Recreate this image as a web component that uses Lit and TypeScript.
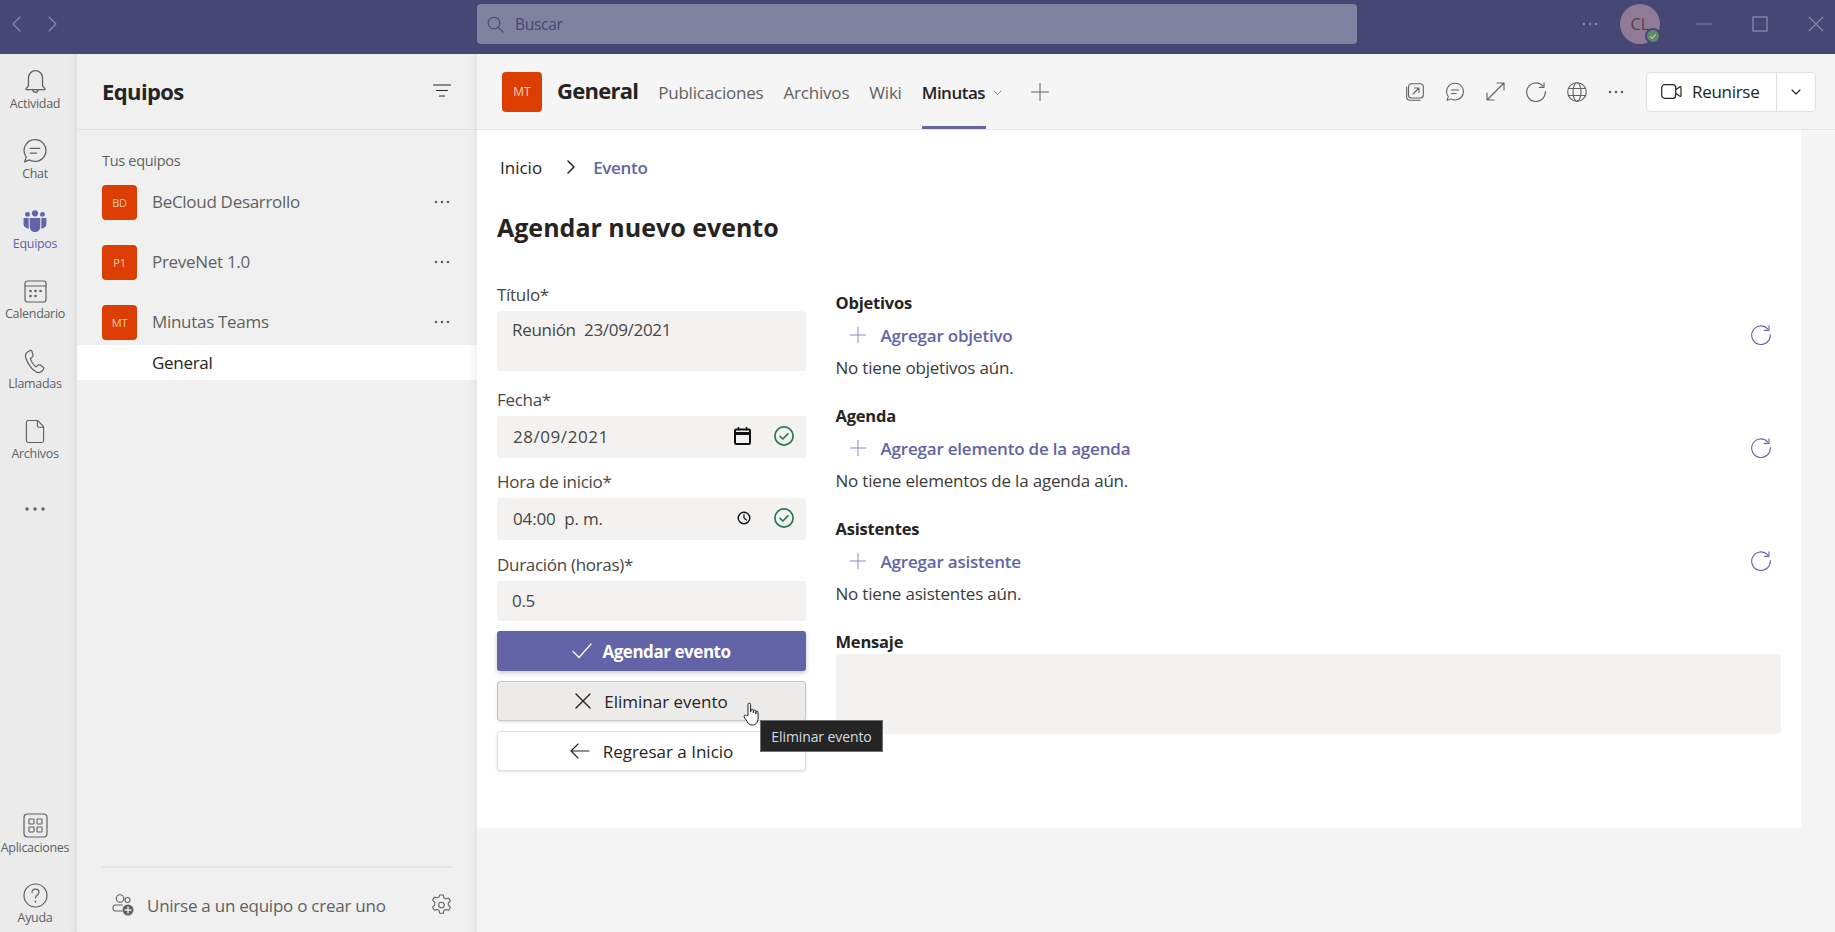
import { LitElement, html, css, svg } from "lit";
import { customElement } from "lit/decorators.js";

const I = (w: number, h: number, vb: string, body: unknown, cls = "") =>
  html`<svg class=${cls} width=${w} height=${h} viewBox=${vb} fill="none" stroke="currentColor" stroke-width="1" stroke-linecap="round" stroke-linejoin="round">${body}</svg>`;

const bell = svg`<path d="M5 16.500V9a6.500 6.500 0 0 1 13 0v7.500l2.200 2.500a.6.6 0 0 1-.4 1H3.200a.6.6 0 0 1-.4-1z" stroke-width="1.200"/><path d="M9 20.500a2.600 2.600 0 0 0 5 0" stroke-width="1.200"/>`;
const chat = svg`<path d="M12.500 1.500a10.500 10.500 0 1 1-5.200 19.600L2.500 23l1.600-4.800A10.500 10.500 0 0 1 12.500 1.500z" stroke-width="1.200"/><path d="M8 10h9M8 14.500h6" stroke-width="1.300"/>`;
const teams = svg`<g fill="currentColor" stroke="none"><circle cx="13" cy="3.800" r="3.500"/><circle cx="4.500" cy="5" r="2.800"/><circle cx="21.500" cy="5" r="2.800"/><path d="M7 9h12v10a6 6 0 0 1-12 0z"/><path d="M0 9h5.800v9.500c0 1 .2 1.800.4 2.500C3 21 0 19 0 15.500z"/><path d="M26 9h-5.800v9.500c0 1-.2 1.800-.4 2.500 3.200 0 6.200-2 6.200-5.500z"/></g>`;
const cal = svg`<rect x="1" y="1" width="21" height="21" rx="2.500" stroke-width="1.200"/><path d="M1 6h21" stroke-width="1.200"/><g fill="currentColor" stroke="none"><circle cx="6.500" cy="11" r="1.300"/><circle cx="11.500" cy="11" r="1.300"/><circle cx="16.500" cy="11" r="1.300"/><circle cx="6.500" cy="16" r="1.300"/><circle cx="11.500" cy="16" r="1.300"/></g>`;
const phone = svg`<path d="M6 1.500 3.500 3C1.500 4.500 1 7 2 9.500c2 5.500 5 10 9.500 13 2.500 1.500 5 1.200 6.500-.5l1.500-1.800c.5-.8.300-1.500-.3-2l-3-2.200c-.7-.5-1.400-.4-2 .1l-1.500 1.300c-.5.300-1 .3-1.500 0-2.200-2-3.700-4.300-4.600-7-.2-.6 0-1 .4-1.300l1.500-1.200c.6-.6.800-1.300.4-2L7.800 2C7.400 1.300 6.700 1.100 6 1.500z" stroke-width="1.200"/>`;
const file = svg`<path d="M3.500 1h10l6 6.500V22a2 2 0 0 1-2 2h-14a2 2 0 0 1-2-2V3a2 2 0 0 1 2-2z" stroke-width="1.200"/><path d="M13 1v5.500a1.500 1.500 0 0 0 1.500 1.500h5" stroke-width="1.200"/>`;
const apps = svg`<rect x="1" y="1" width="23" height="23" rx="3.500" stroke-width="1.200"/><rect x="6" y="6" width="5" height="5" rx=".8" stroke-width="1.100"/><rect x="14" y="6" width="5" height="5" rx=".8" stroke-width="1.100"/><rect x="6" y="14" width="5" height="5" rx=".8" stroke-width="1.100"/><rect x="14" y="14" width="5" height="5" rx=".8" stroke-width="1.100"/>`;
const help = svg`<circle cx="12.500" cy="12.500" r="11.500" stroke-width="1.200"/><path d="M9 9.500c0-2 1.500-3.300 3.500-3.300s3.500 1.300 3.500 3.100c0 2.700-3.500 2.700-3.500 5.700" stroke-width="1.200"/><circle cx="12.500" cy="18.500" r=".9" fill="currentColor" stroke="none"/>`;
const refreshP = svg`<path d="M16.800 3.800A9.300 9.300 0 1 0 19.300 9.500" stroke-width="1.100"/><path d="M18 .8v4.600h-4.600" stroke-width="1.100"/>`;
const plus = svg`<path d="M8 0v16M0 8h16" stroke-width="1"/>`;
const check = svg`<circle cx="9" cy="9" r="8.200" stroke-width="1.500"/><path d="M5.500 9.300 8 11.700l4.500-4.600" stroke-width="1.500"/>`;

const rail = [
  { l: "Actividad", ic: I(25, 26, "0 0 23 24", bell) },
  { l: "Chat", ic: I(26, 26, "0 0 25 25", chat) },
  { l: "Equipos", ic: I(26, 22, "0 0 26 25", teams), a: true },
  { l: "Calendario", ic: I(23, 23, "0 0 23 23", cal) },
  { l: "Llamadas", ic: I(22, 25, "0 0 22 25", phone) },
  { l: "Archivos", ic: I(20, 25, "0 0 21 25", file) },
];
const rail2 = [
  { l: "Aplicaciones", ic: I(25, 25, "0 0 25 25", apps) },
  { l: "Ayuda", ic: I(25, 25, "0 0 25 25", help) },
];
const teamsList = [
  { a: "BD", n: "BeCloud Desarrollo" },
  { a: "P1", n: "PreveNet 1.0" },
  { a: "MT", n: "Minutas Teams" },
];
const sections = [
  { h: "Objetivos", add: "Agregar objetivo", e: "No tiene objetivos aún." },
  { h: "Agenda", add: "Agregar elemento de la agenda", e: "No tiene elementos de la agenda aún." },
  { h: "Asistentes", add: "Agregar asistente", e: "No tiene asistentes aún." },
];

@customElement("app-root")
export class AppRoot extends LitElement {
  static styles = css`
    :host { display: block; width: 1835px; height: 932px; overflow: hidden; font-family: "Open Sans", "Noto Sans", sans-serif; color: #252423; background: #f5f5f5; }
    * { box-sizing: border-box; }
    svg { display: block; flex: none; }
    .top { height: 54px; background: #464775; display: flex; align-items: center; color: #8a8aa8; padding-bottom: 6px; }
    .nav { width: 477px; display: flex; gap: 23px; padding-left: 11px; flex: none; }
    .search { width: 880px; height: 40px; background: #8181a0; border-radius: 4px; display: flex; align-items: center; padding-left: 10px; gap: 11px; color: #464775; font-size: 15.500px; letter-spacing: -.3px; flex: none; }
    .top-r { flex: 1; display: flex; align-items: center; padding-left: 225px; }
    .ava { width: 40px; height: 40px; border-radius: 50%; background: #8f7b95; color: #5d3c55; font-size: 16px; font-weight: 500; display: flex; align-items: center; justify-content: center; position: relative; margin-left: 22px; letter-spacing: .3px; }
    .badge { position: absolute; right: -1px; bottom: 0; width: 16px; height: 16px; border-radius: 50%; background: #618a6b; border: 2px solid #464775; color: #c9d8cc; display: flex; align-items: center; justify-content: center; }
    .win { display: flex; align-items: center; margin-left: 36px; }
    .gapw { width: 40px; }
    .body { display: flex; height: 878px; }
    .rail { width: 77px; flex: none; background: #ebebeb; display: flex; flex-direction: column; padding: 1px 7px 0 0; box-shadow: inset -8px 0 8px -8px rgba(0,0,0,.1); overflow: hidden; }
    .ri { height: 70px; flex: none; display: flex; flex-direction: column; align-items: center; justify-content: flex-end; padding-bottom: 13px; font-size: 12.500px; line-height: 16px; letter-spacing: -.3px; color: #616161; gap: 2px; white-space: nowrap; }
    .ri .box { height: 26px; display: flex; align-items: center; justify-content: center; }
    .ri.a { color: #6264a7; }
    .rdots { height: 68px; flex: none; display: flex; justify-content: center; align-items: center; color: #616161; }
    .sp { flex: 1; }
    .ri.last { margin-bottom: -7px; }
    .side { width: 400px; flex: none; background: #f0f0f0; display: flex; flex-direction: column; box-shadow: inset -8px 0 8px -8px rgba(0,0,0,.09); }
    .side-h { height: 76px; flex: none; border-bottom: 1px solid #e1e1e1; display: flex; align-items: center; justify-content: space-between; padding: 0 26px 2px 25px; }
    .side-h h2 { margin: 0; font-size: 22px; font-weight: 700; letter-spacing: -.6px; color: #252423; }
    .tus { font-size: 14.500px; letter-spacing: -.3px; color: #616161; margin: 21px 0 0 25px; height: 20px; line-height: 20px; }
    .team { height: 60px; display: flex; align-items: center; padding: 0 27px 0 25px; flex: none; }
    .teams { margin-top: 1px; }
    .tav { width: 35px; height: 35px; background: #dc3e00; border-radius: 4px; color: #f4c8b0; font-size: 11px; display: flex; align-items: center; justify-content: center; flex: none; letter-spacing: -.2px; }
    .tn { margin-left: 15px; flex: 1; font-size: 17px; letter-spacing: -.3px; color: #616161; position: relative; top: -1px; }
    .gen { height: 35px; background: linear-gradient(90deg, #fff 98%, #f3f3f3); margin-top: -7px; padding-left: 75px; display: flex; align-items: center; font-size: 17px; letter-spacing: -.3px; color: #252423; width: 400px; }
    .side-f { margin: auto 25px 0; height: 66px; border-top: 2px solid #e3e3e3; display: flex; align-items: center; padding: 10px 0 0 10px; font-size: 17px; letter-spacing: -.25px; color: #616161; flex: none; }
    .side-f span { margin-left: 13px; flex: 1; }
    .main { flex: 1; display: flex; flex-direction: column; min-width: 0; }
    .mh { height: 76px; flex: none; background: #f5f5f5; border-bottom: 1px solid #e4e4e4; display: flex; align-items: center; padding: 0 19px 0 25px; }
    .mav { width: 40px; height: 40px; background: #dc3e00; border-radius: 4px; color: #f7d3c0; font-size: 12px; display: flex; align-items: center; justify-content: center; flex: none; }
    .mh h3 { margin: 0 0 0 15px; font-size: 22px; font-weight: 700; letter-spacing: -.75px; color: #252423; position: relative; top: -2px; }
    .tabs { display: flex; align-self: stretch; margin-left: 20px; gap: 20px; }
    .tab { font-size: 17px; letter-spacing: -.2px; color: #616161; display: flex; align-items: center; position: relative; padding-top: 1px; }
    .tab.on { color: #252423; font-weight: 600; letter-spacing: -.5px; }
    .tab.on::after { content: ""; position: absolute; left: 0; width: 64px; bottom: 0; height: 3px; background: #6264a7; }
    .tchev { margin: 2px 0 0 8px; color: #8a8a8a; }
    .tplus { margin-left: 29px; color: #616161; }
    .hicons { margin-left: auto; display: flex; align-items: center; color: #616161; gap: 21px; }
    .join { margin-left: 22px; width: 170px; height: 40px; border: 1px solid #e1dfdd; border-radius: 5px; background: #fff; display: flex; align-items: center; color: #252423; }
    .join .l { width: 130px; height: 100%; border-right: 1px solid #e1dfdd; display: flex; align-items: center; padding-left: 14px; gap: 10px; font-size: 17px; font-weight: 500; letter-spacing: -.3px; }
    .join .r { flex: 1; display: flex; justify-content: center; }
    .content { width: 1324px; height: 698px; background: #fff; padding: 0 20px; flex: none; }
    .crumb { height: 36px; margin-top: 19px; padding-left: 3px; display: flex; align-items: center; font-size: 17px; }
    .crumb a { color: #6264a7; font-weight: 600; letter-spacing: -.3px; }
    .crumb svg { margin: 0 18px 0 25px; }
    h1 { margin: 0; font-size: 25px; font-weight: 700; height: 40px; line-height: 40px; margin-top: 22px; color: #252423; }
    .cols { display: grid; grid-template-columns: 309px 945px; column-gap: 30px; margin-top: 1px; }
    .form { display: flex; flex-direction: column; padding-top: 34px; }
    label { display: block; font-size: 17px; letter-spacing: -.3px; color: #484644; height: 25px; line-height: 25px; margin-bottom: 4px; }
    .in { background: #f3f2f1; border-radius: 3px; font-size: 17px; letter-spacing: -.3px; color: #484644; display: flex; align-items: center; padding-left: 15px; height: 42px; }
    .in.t { height: 60px; align-items: flex-start; padding-top: 7px; line-height: 24px; }
    .in.d { padding: 0 0 2px 16px; letter-spacing: .55px; }
    .in.h { padding: 0 0 2px 16px; letter-spacing: -.15px; }
    .in.n { height: 40px; padding-bottom: 2px; }
    .in .c { margin-left: auto; }
    .in .cal { margin-right: 23px; color: #111; }
    .in .chk { margin-right: 12px; color: #237b4b; }
    .f2 { margin-top: 16px; }
    .f3 { margin-top: 11px; }
    .f4 { margin-top: 12px; }
    .btn { height: 40px; border-radius: 3px; display: flex; align-items: center; justify-content: center; gap: 13px; font-size: 17px; margin-top: 10px; border: 1px solid #e1dfdd; background: #fff; box-shadow: 0 1px 3px rgba(0,0,0,.12); font-weight: 500; position: relative; }
    .btn.p { background: #6264a7; border: 0; color: #fff; font-weight: 700; box-shadow: 0 2px 5px rgba(0,0,0,.22); letter-spacing: -.45px; gap: 10px; }
    .btn.h { background: #edebe9; border-color: #c8c6c4; }
    .tip { position: absolute; left: 262px; top: 38px; width: 123px; height: 32px; background: #252526; border: 1px solid #6e6e6e; color: #d4dce4; font-size: 14px; font-weight: 400; letter-spacing: -.1px; display: flex; align-items: center; justify-content: center; z-index: 3; white-space: nowrap; }
    .cur { position: absolute; left: 245px; top: 20px; z-index: 4; }
    .right { padding-top: 42px; margin-left: -.5px; }
    .sec { height: 113px; }
    .sec h4, .mh4 { margin: 0; font-size: 16.500px; font-weight: 700; letter-spacing: -.2px; height: 25px; line-height: 25px; color: #252423; }
    .add { display: flex; align-items: center; height: 32px; margin-top: 4px; padding: 0 10px 0 14px; color: #6264a7; font-size: 17px; font-weight: 600; letter-spacing: -.2px; }
    .add span { margin-left: 15px; flex: 1; }
    .add .pl { color: #8b8cc7; }
    .emp { font-size: 17px; letter-spacing: -.2px; color: #3b3a39; height: 33px; line-height: 33px; }
    .msg { height: 80px; background: #f3f2f1; border-radius: 3px; }
  `;

  render() {
    const ri = (r: { l: string; ic: unknown; a?: boolean }, cls = "") =>
      html`<div class="ri ${r.a ? "a" : ""} ${cls}"><div class="box">${r.ic}</div>${r.l}</div>`;
    return html`
      <div class="top">
        <div class="nav">
          ${I(12, 18, "0 0 12 18", svg`<path d="M9 2 2 9l7 7" stroke-width="1.200"/>`)}
          ${I(12, 18, "0 0 12 18", svg`<path d="m3 2 7 7-7 7" stroke-width="1.200"/>`)}
        </div>
        <div class="search">
          ${I(17, 17, "0 0 17 17", svg`<circle cx="7" cy="7" r="5.800" stroke-width="1.100"/><path d="m11.200 11.200 5 5" stroke-width="1.100"/>`)}
          <span>Buscar</span>
        </div>
        <div class="top-r">
          ${I(16, 4, "0 0 16 4", svg`<g fill="currentColor" stroke="none"><circle cx="2" cy="2" r="1.200"/><circle cx="8" cy="2" r="1.200"/><circle cx="14" cy="2" r="1.200"/></g>`)}
          <div class="ava">CL
            <div class="badge">${I(8, 7, "0 0 9 8", svg`<path d="m1.500 4 2 2 4-4" stroke-width="1.200"/>`)}</div>
          </div>
          <div class="win">
            ${I(16, 2, "0 0 16 2", svg`<path d="M0 1h16" stroke-width="1.200"/>`)}
            <div class="gapw"></div>
            ${I(16, 16, "0 0 16 16", svg`<rect x="1" y="1" width="14" height="14" stroke-width="1.300" stroke-linejoin="miter"/>`)}
            <div class="gapw"></div>
            ${I(16, 16, "0 0 16 16", svg`<path d="m1 1 14 14M15 1 1 15" stroke-width="1.100"/>`)}
          </div>
        </div>
      </div>
      <div class="body">
        <nav class="rail">
          ${rail.map((r) => ri(r))}
          <div class="rdots">${I(20, 4, "0 0 20 4", svg`<g fill="currentColor" stroke="none"><circle cx="2" cy="2" r="1.700"/><circle cx="10" cy="2" r="1.700"/><circle cx="18" cy="2" r="1.700"/></g>`)}</div>
          <div class="sp"></div>
          ${ri(rail2[0])}
          ${ri(rail2[1], "last")}
        </nav>
        <aside class="side">
          <div class="side-h">
            <h2>Equipos</h2>
            ${I(18, 13, "0 0 18 13", svg`<path d="M.5 1h17M3.500 6.500h11M6.500 12h5" stroke-width="1.100"/>`)}
          </div>
          <div class="tus">Tus equipos</div>
          <div class="teams">
            ${teamsList.map((t) => html`<div class="team"><div class="tav">${t.a}</div><div class="tn">${t.n}</div>${I(16, 4, "0 0 16 4", svg`<g fill="#616161" stroke="none"><circle cx="2" cy="2" r="1.300"/><circle cx="8" cy="2" r="1.300"/><circle cx="14" cy="2" r="1.300"/></g>`)}</div>`)}
          </div>
          <div class="gen">General</div>
          <div class="side-f">
            ${I(22, 22, "0 0 22 22", svg`<circle cx="8" cy="4.500" r="3.700" stroke-width="1.100"/><circle cx="15.500" cy="6" r="2.500" stroke-width="1.100"/><path d="M10 17H3.500A2.500 2.500 0 0 1 1 14.500v-1A2.500 2.500 0 0 1 3.500 11h7" stroke-width="1.100"/><circle cx="16" cy="16" r="5.500" fill="#616161" stroke="none"/><path d="M16 13v6M13 16h6" stroke="#f0f0f0" stroke-width="1.300"/>`)}
            <span>Unirse a un equipo o crear uno</span>
            ${I(21, 22, "0 0 21 22", svg`<path d="M8.700 1h3.600l.6 2.800 2 1.100 2.700-.9 1.800 3.100-2.100 1.900v2.200l2.100 2-1.800 3.100-2.700-.9-2 1.100-.6 2.800H8.700l-.6-2.800-2-1.100-2.700.9-1.800-3.100 2.100-2V8l-2.100-1.900L3.400 3l2.700.9 2-1.100z" stroke-width="1.100"/><circle cx="10.500" cy="11" r="2.800" stroke-width="1.100"/>`)}
          </div>
        </aside>
        <main class="main">
          <div class="mh">
            <div class="mav">MT</div>
            <h3>General</h3>
            <div class="tabs">
              <div class="tab">Publicaciones</div>
              <div class="tab">Archivos</div>
              <div class="tab">Wiki</div>
              <div class="tab on">Minutas${I(9, 6, "0 0 9 6", svg`<path d="m1 1 3.500 3.500L8 1" stroke-width="1"/>`, "tchev")}</div>
            </div>
            ${I(18, 18, "0 0 18 18", svg`<path d="M9 .5v17M.5 9h17" stroke-width="1"/>`, "tplus")}
            <div class="hicons">
              ${I(18, 18, "0 0 18 18", svg`<rect x="2.500" y=".7" width="14.800" height="14.300" rx="3" stroke-width="1.100"/><path d="M.7 4v10a3.300 3.300 0 0 0 3.300 3.300h10" stroke-width="1.100"/><path d="m7 11 6-6M8.500 5H13v4.500" stroke-width="1.100"/>`)}
              ${I(20, 20, "0 0 25 25", svg`<path d="M12.500 1.500a10.500 10.500 0 1 1-5.200 19.600L2.500 23l1.600-4.800A10.500 10.500 0 0 1 12.500 1.500z" stroke-width="1.300"/><path d="M8 10h9M8 14.500h6" stroke-width="1.300"/>`)}
              ${I(19, 19, "0 0 19 19", svg`<path d="M1 18 18 1M11 1h7v7M1 11v7h7" stroke-width="1.100"/>`)}
              ${I(20, 20, "0 0 20 20", refreshP)}
              ${I(20, 20, "0 0 20 20", svg`<circle cx="10" cy="10" r="9.300" stroke-width="1.100"/><ellipse cx="10" cy="10" rx="4" ry="9.300" stroke-width="1.100"/><path d="M1.500 6.500h17M1.500 13.500h17" stroke-width="1.100"/>`)}
              ${I(16, 4, "0 0 16 4", svg`<g fill="currentColor" stroke="none"><circle cx="2" cy="2" r="1.300"/><circle cx="8" cy="2" r="1.300"/><circle cx="14" cy="2" r="1.300"/></g>`)}
            </div>
            <div class="join">
              <div class="l">
                ${I(21, 15, "0 0 21 15", svg`<rect x=".7" y=".7" width="14" height="13.600" rx="3" stroke-width="1.200"/><path d="m15 5.500 4-2.800c.5-.3 1 0 1 .6v8.400c0 .6-.5.900-1 .6l-4-2.800" stroke-width="1.200"/>`)}
                <span>Reunirse</span>
              </div>
              <div class="r">${I(10, 6, "0 0 10 6", svg`<path d="m1 1 4 4 4-4" stroke-width="1.100"/>`)}</div>
            </div>
          </div>
          <div class="content">
            <div class="crumb">
              <span>Inicio</span>
              ${I(8, 14, "0 0 8 14", svg`<path d="m1 1 6 6-6 6" stroke-width="1.500"/>`)}
              <a>Evento</a>
            </div>
            <h1>Agendar nuevo evento</h1>
            <div class="cols">
              <div class="form">
                <label>Título*</label>
                <div class="in t">Reunión&nbsp; 23/09/2021</div>
                <div class="f2"><label>Fecha*</label>
                  <div class="in d">28/09/2021
                    ${I(17, 18, "0 0 17 18", svg`<rect x="1" y="2.500" width="15" height="14.500" rx="1.200" stroke-width="2"/><path d="M1 6.500h15" stroke-width="3"/><path d="M4.500 .5v2M12.500 .5v2" stroke-width="1.600"/>`, "c cal")}
                    ${I(20, 20, "0 0 18 18", check, "chk")}
                  </div>
                </div>
                <div class="f3"><label>Hora de inicio*</label>
                  <div class="in h">04:00&nbsp; p. m.
                    ${I(14, 14, "0 0 14 14", svg`<circle cx="7" cy="7" r="5.800" stroke-width="1.400"/><path d="M7 3.500V7l2.500 2" stroke-width="1.200"/>`, "c cal")}
                    ${I(20, 20, "0 0 18 18", check, "chk")}
                  </div>
                </div>
                <div class="f4"><label>Duración (horas)*</label>
                  <div class="in n">0.5</div>
                </div>
                <div class="btn p">${I(20, 16, "0 0 20 16", svg`<path d="m1 8.500 6 6L19 1" stroke-width="1.200"/>`)}<span>Agendar evento</span></div>
                <div class="btn h">${I(16, 16, "0 0 16 16", svg`<path d="m1 1 14 14M15 1 1 15" stroke-width="1.400"/>`)}<span>Eliminar evento</span>
                  <div class="tip">Eliminar evento</div>
                  ${I(18, 25, "0 0 18 25", svg`<path d="M5 13V2.500a1.300 1.300 0 0 1 2.600 0V10l.4-2a1.200 1.200 0 0 1 2.300.2V11l.3-2a1.100 1.100 0 0 1 2.200.2V12l.3-1.800a1 1 0 0 1 2 .2V16c0 4-2 7-5.500 7H9c-2.500 0-3.500-1-5-3.500L1.200 15c-.7-1.500 1-2.500 2-1.500z" fill="#fff" stroke="#222" stroke-width="1"/>`, "cur")}
                </div>
                <div class="btn">${I(20, 16, "0 0 20 16", svg`<path d="M19 8H1M8 1 1 8l7 7" stroke-width="1.100"/>`)}<span>Regresar a Inicio</span></div>
              </div>
              <div class="right">
                ${sections.map((s) => html`<div class="sec">
                  <h4>${s.h}</h4>
                  <div class="add">
                    ${I(16, 16, "0 0 16 16", plus, "pl")}
                    <span>${s.add}</span>
                    ${I(20, 20, "0 0 20 20", refreshP)}
                  </div>
                  <div class="emp">${s.e}</div>
                </div>`)}
                <h4 class="mh4">Mensaje</h4>
                <div class="msg"></div>
              </div>
            </div>
          </div>
        </main>
      </div>
    `;
  }
}
